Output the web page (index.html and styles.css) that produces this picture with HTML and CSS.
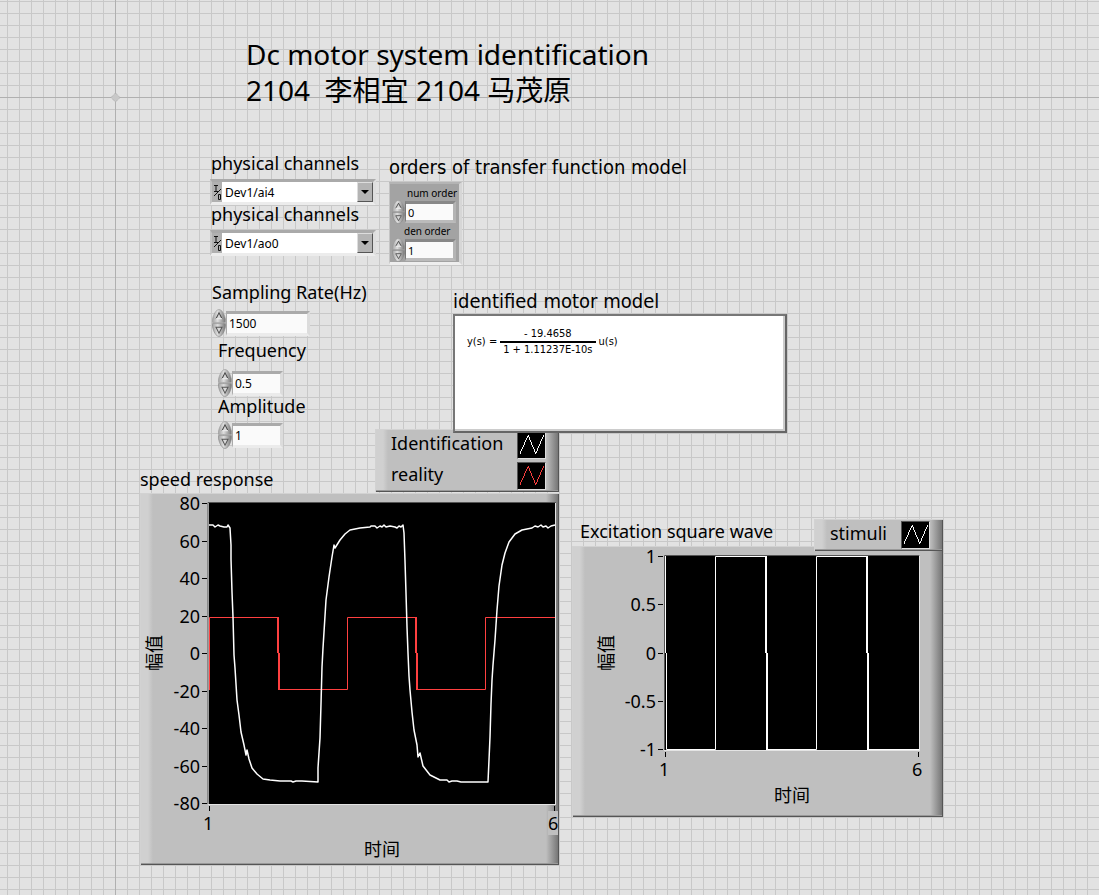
FILE: index.html
```html
<!DOCTYPE html>
<html lang="en">
<head>
<meta charset="utf-8">
<title>Dc motor system identification</title>
<link rel="stylesheet" href="styles.css">
</head>
<body>
<svg class="defs" width="0" height="0" aria-hidden="true">
  <defs>
    <linearGradient id="metal" x1="0" x2="1" y1="0" y2="0">
      <stop offset="0" stop-color="#a4a4a4"/><stop offset=".4" stop-color="#dedede"/><stop offset="1" stop-color="#777"/>
    </linearGradient>
    <symbol id="spin-up" viewBox="0 0 14 13" preserveAspectRatio="none">
      <path d="M.5 12.500V9.500C1.500 5 4 .5 7 .5S12.500 5 13.500 9.500v3z" fill="url(#metal)" stroke="#999" stroke-width=".6"/>
      <path d="M4 9 7 3.500 10 9" fill="#d8d8d8" stroke="#444"/>
      <path d="M4 9h6" stroke="#eee"/>
    </symbol>
    <symbol id="spin-down" viewBox="0 0 14 13" preserveAspectRatio="none">
      <path d="M.5 .5v3c1 4.500 3.500 9 6.500 9s5.500-4.500 6.500-9v-3z" fill="url(#metal)" stroke="#888" stroke-width=".6"/>
      <path d="M4 4h6L7 9.500z" fill="#d8d8d8" stroke="#555"/>
    </symbol>
    <symbol id="wave" viewBox="0 0 28 27">
      <path d="M2 22.500 10.500 3.500l8 19 8-19" fill="none" stroke="currentColor" shape-rendering="crispEdges"/>
    </symbol>
    <symbol id="io" viewBox="0 0 9 17">
      <path d="M1 1.500h4M3 1.500v6M1 7.500h4M8 5 1 12M5.500 10.500h2v5h-2z" fill="none" stroke="#111"/>
    </symbol>
  </defs>
</svg>
<main class="canvas">
  <svg class="origin" viewBox="0 0 11 11" aria-hidden="true"><path d="M5.500 1 10 5.500 5.500 10 1 5.500z" fill="#c8c8c8" stroke="#a8a8a8" stroke-dasharray="1 1"/></svg>

  <h1 class="title">Dc motor system identification<br>2104&nbsp; 李相宜 2104 马茂原</h1>

  <div class="item channel channel-in">
    <label class="caption" for="ai">physical channels</label>
    <div class="combo">
      <svg class="io"><use href="#io"/></svg>
      <select id="ai"><option>Dev1/ai4</option></select>
      <span class="arrow"></span>
    </div>
  </div>
  <div class="item channel channel-out">
    <label class="caption" for="ao">physical channels</label>
    <div class="combo">
      <svg class="io"><use href="#io"/></svg>
      <select id="ao"><option>Dev1/ao0</option></select>
      <span class="arrow"></span>
    </div>
  </div>

  <section class="item orders">
    <h2 class="caption alt">orders of transfer function model</h2>
    <div class="cluster">
      <label for="num">num order</label>
      <div class="numeric">
        <div class="spin"><button type="button" aria-label="Increase num order"><svg><use href="#spin-up"/></svg></button><button type="button" aria-label="Decrease num order"><svg><use href="#spin-down"/></svg></button></div>
        <input id="num" type="text" value="0">
      </div>
      <label class="den" for="den">den order</label>
      <div class="numeric">
        <div class="spin"><button type="button" aria-label="Increase den order"><svg><use href="#spin-up"/></svg></button><button type="button" aria-label="Decrease den order"><svg><use href="#spin-down"/></svg></button></div>
        <input id="den" type="text" value="1">
      </div>
    </div>
  </section>

  <div class="item rate">
    <label class="caption" for="rate">Sampling Rate(Hz)</label>
    <div class="numeric wide">
      <div class="spin"><button type="button" aria-label="Increase rate"><svg><use href="#spin-up"/></svg></button><button type="button" aria-label="Decrease rate"><svg><use href="#spin-down"/></svg></button></div>
      <input id="rate" type="text" value="1500">
    </div>
  </div>
  <div class="item frequency">
    <label class="caption" for="freq">Frequency</label>
    <div class="numeric">
      <div class="spin"><button type="button" aria-label="Increase frequency"><svg><use href="#spin-up"/></svg></button><button type="button" aria-label="Decrease frequency"><svg><use href="#spin-down"/></svg></button></div>
      <input id="freq" type="text" value="0.5">
    </div>
  </div>
  <div class="item amplitude">
    <label class="caption" for="amp">Amplitude</label>
    <div class="numeric">
      <div class="spin"><button type="button" aria-label="Increase amplitude"><svg><use href="#spin-up"/></svg></button><button type="button" aria-label="Decrease amplitude"><svg><use href="#spin-down"/></svg></button></div>
      <input id="amp" type="text" value="1">
    </div>
  </div>

  <h2 class="item caption speed-title">speed response</h2>
  <figure class="item plate speed">
    <svg viewBox="140 493 419 372" role="img" aria-label="speed response">
      <rect x="208" y="502" width="348" height="303" fill="#e4e4e4"/>
      <path d="M208 804V502.500h348" fill="none" stroke="#555"/>
      <rect x="209" y="503" width="346" height="301"/>
      <path class="tick" d="M202 503.500h5M202 541.500h5M202 578.500h5M202 616.500h5M202 653.500h5M202 691.500h5M202 728.500h5M202 766.500h5M202 803.500h5M209.500 806v5M554.500 806v5"/>
      <path class="reality" d="M209.500 690V617.500H278M347.500 689.500V617.500H416.500M278.500 689.500H347.500M417 689.500H485.500V617.500H555"/>
      <path class="reality fall" d="M278 617V653M279 653V690M416 617V653M417 653V690"/>
      <path class="ident" d="M209 525 213 525 215 527 218 525 220 526 224 527 227 527 228 525 230 528 231 545 231 559 232 592 233 617 234 655 235 668 237 700 239 715 241 732 244 745 246 755 247 750 249 759 252 768 257 774 263 779 270 780 280 781 291 781 293 782 296 781 302 781 318 782 318 768 320 738 321 704 322 667 323 648 326 600 329 577 332 557 334 545 335 548 340 540 345 534 350 530 360 528 370 527 371 526 375 526 377 528 380 526 382 527 384 525 386 527 390 526 395 527 397 528 399 526 401 527 403 525 404 533 405 561 406 593 407 627 408 653 409 676 410 690 412 712 414 730 417 745 418 757 420 753 423 766 430 775 440 780 447 780 449 782 452 781 457 781 461 782 488 782 489 760 490 737 491 704 492 680 493 665 495 640 497 610 499 586 502 565 505 553 509 542 515 534 522 530 532 528 535 526 538 527 541 525 543 527 546 526 548 528 551 526 555 525"/>
      <g class="num"><g text-anchor="end">
        <text x="200" y="510">80</text><text x="200" y="548">60</text><text x="200" y="585">40</text><text x="200" y="623">20</text><text x="200" y="660">0</text><text x="200" y="698">-20</text><text x="200" y="735">-40</text><text x="200" y="773">-60</text><text x="200" y="810">-80</text></g>
        <text x="203" y="830">1</text>
        <rect x="548" y="811" width="10" height="24" fill="#bfbfbf"/>
        <text x="548" y="830">6</text>
        <text x="364" y="856">时间</text>
        <text transform="translate(161 671) rotate(-90)">幅值</text>
      </g>
    </svg>
  </figure>
  <ul class="item plate legend speed-legend">
    <li><span>Identification</span><svg class="swatch"><use href="#wave"/></svg></li>
    <li><span>reality</span><svg class="swatch red"><use href="#wave"/></svg></li>
  </ul>

  <section class="item model">
    <h2 class="caption alt">identified motor model</h2>
    <div class="formula">
      <div class="equation"><span>y(s) =</span><span class="fraction"><span>- 19.4658</span><span class="below">1 + 1.11237E-10s</span></span><span>u(s)</span></div>
    </div>
  </section>

  <h2 class="item caption excitation-title">Excitation square wave</h2>
  <figure class="item plate excitation">
    <svg viewBox="572 546 371 271" role="img" aria-label="Excitation square wave">
      <rect x="664" y="555" width="256" height="196" fill="#e4e4e4"/>
      <path d="M664.500 750V555.500h255" fill="none" stroke="#555"/>
      <rect x="665" y="556" width="254" height="194"/>
      <path class="tick" d="M658 556.500h5M658 604.500h5M658 653.500h5M658 701.500h5M658 749.500h5M665.500 752v5M918.500 752v5"/>
      <path class="stimuli" d="M665.500 556V653M666.500 653V749.500H715.500V556.500H766M767 749.500H816.500V556.500H867M868 749.500H919"/>
      <path class="stimuli fall" d="M766 556V653M767 653V750M867 556V653M868 653V750"/>
      <g class="num"><g text-anchor="end">
        <text x="656" y="563">1</text><text x="656" y="611">0.5</text><text x="656" y="660">0</text><text x="656" y="708">-0.5</text><text x="656" y="756">-1</text></g>
        <text x="659" y="776">1</text><text x="912" y="776">6</text>
        <text x="774" y="802">时间</text>
        <text transform="translate(613 671) rotate(-90)">幅值</text>
      </g>
    </svg>
  </figure>
  <ul class="item plate legend excitation-legend">
    <li><span>stimuli</span><svg class="swatch"><use href="#wave"/></svg></li>
  </ul>
</main>
</body>
</html>
```
FILE: styles.css
```css
* { box-sizing: border-box; }

body {
  margin: 0;
  color: #000;
  font-family: "Noto Sans", "Noto Sans CJK SC", sans-serif;
}

.defs { position: absolute; }

/* Front panel: a free canvas with a 12px alignment grid */
.canvas {
  position: relative;
  min-height: 100vh;
  overflow: hidden;
  background:
    linear-gradient(#b0b0b0, #b0b0b0) 115px 0 / 1px 100% no-repeat,
    linear-gradient(#b0b0b0, #b0b0b0) 0 97px / 100% 1px no-repeat,
    linear-gradient(90deg, #c8c8c8 1px, transparent 1px) 7px 0 / 12px 12px,
    linear-gradient(#c8c8c8 1px, transparent 1px) 0 1px / 12px 12px,
    #e2e2e2;
}

.item, .origin, .title { position: absolute; margin: 0; }
.origin { left: 110px; top: 92px; width: 11px; height: 11px; }

.title {
  left: 246px;
  top: 36px;
  font-size: 28px;
  font-weight: 400;
  line-height: 36px;
  white-space: nowrap;
}

.caption {
  display: block;
  margin: 0;
  font-size: 18px;
  font-weight: 400;
  line-height: 24px;
  white-space: nowrap;
}
.alt { font-family: "DejaVu Sans Condensed", "DejaVu Sans", sans-serif; font-size: 20px; }

.channel { width: 166px; }
.channel-in { left: 210px; top: 151px; }
.channel-out { left: 210px; top: 202px; }
.channel .caption { padding-left: 1px; }
.orders { left: 389px; top: 155px; }
.rate { left: 212px; top: 280px; }
.frequency { left: 218px; top: 338px; }
.amplitude { left: 218px; top: 394px; }
.model { left: 453px; top: 289px; width: 334px; }
.speed-title { left: 140px; top: 467px; }
.speed { left: 140px; top: 493px; width: 419px; }
.speed-legend { left: 375px; top: 429px; width: 184px; }
.excitation-title { left: 580px; top: 519px; }
.excitation { left: 572px; top: 546px; width: 371px; }
.excitation-legend { left: 814px; top: 519px; width: 129px; }

/* Drop-downs */
.combo {
  display: flex;
  margin-top: 4px;
  height: 26px;
  border: solid;
  border-width: 3px 3px 3px 2px;
  border-color: #aaa #dedede #ececec #c4c4c4;
  background: #b0b0b0;
}
.io { width: 9px; height: 17px; margin: 2px 0 0 1px; }
.combo select {
  flex: 1;
  min-width: 0;
  appearance: none;
  padding: 0 3px;
  border: 0;
  border-radius: 0;
  background: #fff;
  color: #000;
  font: 12px "Noto Sans", sans-serif;
}
.arrow {
  display: grid;
  place-items: center;
  width: 16px;
  background: #b4b4b4;
  border: 1px solid;
  border-color: #ddd #555 #555 #ddd;
}
.arrow::before {
  content: "";
  border: 4px solid transparent;
  border-top-color: #000;
  border-bottom: 0;
}

/* Numeric controls */
.numeric { display: flex; align-items: center; margin-top: 5px; }
.spin { display: flex; flex-direction: column; flex: none; width: 14px; }
.spin button { display: block; width: 100%; height: 14px; padding: 0; border: 0; background: none; }
.spin svg { display: block; width: 100%; height: 100%; }
.numeric input {
  width: 51px;
  height: 25px;
  padding: 0 2px;
  border: solid;
  border-width: 3px 3px 3px 1px;
  border-color: #aaa #dcdcdc #ebebeb #aaa;
  border-radius: 0;
  background: #fafafa;
  color: #000;
  font: 12px "Noto Sans", sans-serif;
}
.wide input { width: 84px; }
.frequency .numeric { margin-top: 7px; }
.amplitude .numeric { margin-top: 3px; }

.cluster {
  width: 73px;
  margin-top: 3px;
  padding: 2px 0 0 2px;
  border: solid;
  border-width: 2px 3px 3px 1px;
  border-color: #b4b4b4 #d6d6d6 #eee #c4c4c4;
  background: #a3a3a3;
}
.cluster label { display: block; padding-left: 15px; font-size: 10px; line-height: 14px; white-space: nowrap; }
.cluster .den { padding-left: 12px; }
.cluster .numeric { margin: 0; }
.cluster .spin button { height: 12px; }
.cluster .spin { width: 13px; }
.cluster input { height: 22px; border-color: #888 #b4b4b4 #bbb #777; font-size: 11px; }

/* Transfer function view */
.formula {
  height: 119px;
  margin-top: 1px;
  padding: 11px 12px;
  background: #fff;
  border: 2px solid;
  border-color: #777 #666 #666 #777;
  box-shadow: inset -2px -2px #ccc;
}
.equation {
  display: flex;
  align-items: center;
  gap: 3px;
  font: 11px/14px "DejaVu Sans Condensed", "DejaVu Sans", sans-serif;
  white-space: nowrap;
}
.fraction { display: grid; text-align: center; }
.below { padding: 0 3px; border-top: 2px solid #000; }

/* Raised grey plates under graphs and legends */
.plate {
  background: linear-gradient(90deg, #d0d0d0 8px, #bfbfbf 13px, #bfbfbf calc(100% - 13px), #707070);
  border: 0;
  box-shadow: inset 1px 1px #d2d2d2, inset -1px -1px #555, inset 0 -2px #999;
}
.plate svg { display: block; width: 100%; overflow: visible; }
.tick { stroke: #000; }
.reality { fill: none; stroke: #ff4040; }
.ident { fill: none; stroke: #fff; stroke-width: 1.5; stroke-linejoin: round; }
.stimuli { fill: none; stroke: #fff; }
.fall { stroke-width: 2; }
.num { font-size: 18px; }

.legend { padding: 0 13px 1px 16px; list-style: none; font-size: 18px; line-height: 24px; }
.legend li { display: flex; align-items: flex-start; justify-content: space-between; padding-top: 2px; height: 31px; }
.legend .swatch {
  width: 29px;
  height: 28px;
  border: solid;
  border-width: 1px;
  border-color: #555 #ddd #ddd #555;
  background: #000;
  color: #fff;
}
.legend .red { color: #ff4040; }
```
